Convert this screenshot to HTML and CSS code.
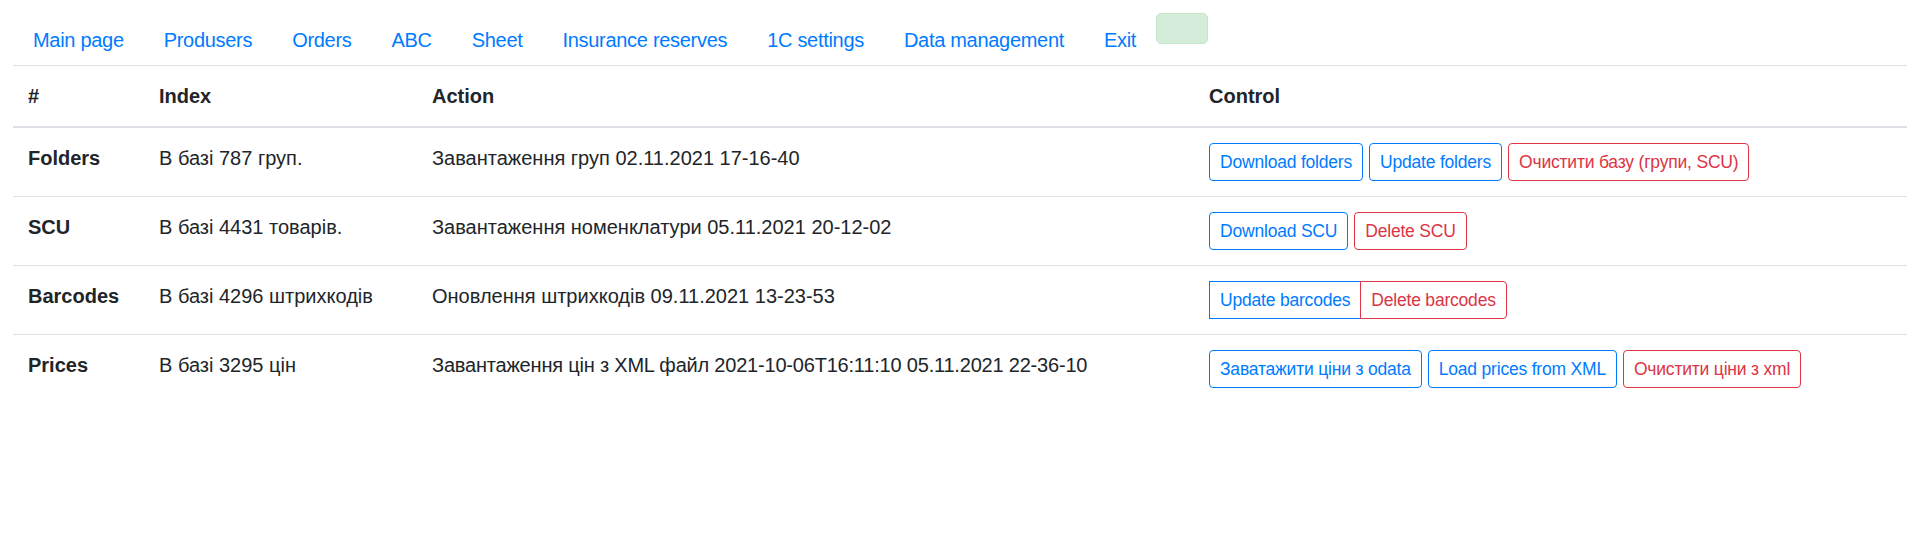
FILE: index.html
```html
<!DOCTYPE html>
<html lang="uk">
<head>
<meta charset="utf-8">
<title>Data management</title>
<link rel="stylesheet" href="styles.css">
</head>
<body>
<div class="page">
  <nav class="nav">
    <a class="nav-link" href="#">Main page</a>
    <a class="nav-link" href="#">Produsers</a>
    <a class="nav-link" href="#">Orders</a>
    <a class="nav-link" href="#">ABC</a>
    <a class="nav-link" href="#">Sheet</a>
    <a class="nav-link" href="#">Insurance reserves</a>
    <a class="nav-link" href="#">1C settings</a>
    <a class="nav-link" href="#">Data management</a>
    <a class="nav-link" href="#">Exit</a>
    <div class="alert-box"></div>
  </nav>
  <table class="table">
    <thead>
      <tr>
        <th class="c1">#</th>
        <th class="c2">Index</th>
        <th class="c3">Action</th>
        <th class="c4">Control</th>
      </tr>
    </thead>
    <tbody>
      <tr>
        <th>Folders</th>
        <td>В базі 787 груп.</td>
        <td>Завантаження груп 02.11.2021 17-16-40</td>
        <td><div class="btns">
          <button class="btn primary">Download folders</button>
          <button class="btn primary">Update folders</button>
          <button class="btn danger">Очистити базу (групи, SCU)</button>
        </div></td>
      </tr>
      <tr>
        <th>SCU</th>
        <td>В базі 4431 товарів.</td>
        <td>Завантаження номенклатури 05.11.2021 20-12-02</td>
        <td><div class="btns">
          <button class="btn primary">Download SCU</button>
          <button class="btn danger">Delete SCU</button>
        </div></td>
      </tr>
      <tr>
        <th>Barcodes</th>
        <td>В базі 4296 штрихкодів</td>
        <td>Оновлення штрихкодів 09.11.2021 13-23-53</td>
        <td><div class="btn-group">
          <button class="btn primary first">Update barcodes</button>
          <button class="btn danger last">Delete barcodes</button>
        </div></td>
      </tr>
      <tr>
        <th>Prices</th>
        <td>В базі 3295 цін</td>
        <td class="long">Завантаження цін з XML файл 2021-10-06T16:11:10 05.11.2021 22-36-10</td>
        <td><div class="btns">
          <button class="btn primary">Заватажити ціни з odata</button>
          <button class="btn primary">Load prices from XML</button>
          <button class="btn danger">Очистити ціни з xml</button>
        </div></td>
      </tr>
    </tbody>
  </table>
</div>
</body>
</html>
```
FILE: styles.css
```css
* { box-sizing: border-box; }
html, body { margin: 0; padding: 0; background: #fff; }
body {
  font-family: "Liberation Sans", Arial, sans-serif;
  font-size: 20px;
  line-height: 30px;
  color: #212529;
}
.page { padding: 0 13px; }
.nav {
  display: flex;
  align-items: flex-start;
  padding-top: 13px;
}
.nav-link {
  display: block;
  padding: 12px 20px 10px;
  color: #007bff;
  text-decoration: none;
  white-space: nowrap;
  letter-spacing: -0.3px;
}
.alert-box {
  width: 52px;
  height: 31px;
  background: #d4edda;
  border: 1px solid #c3e6cb;
  border-radius: 5px;
}
.table {
  width: 100%;
  border-collapse: separate;
  border-spacing: 0;
}
.table th, .table td {
  padding: 15px;
  text-align: left;
  vertical-align: top;
}
.table th { font-weight: 700; }
.table thead th {
  border-top: 1px solid #dee2e6;
  border-bottom: 2px solid #dee2e6;
}
.table tbody tr + tr > * { border-top: 1px solid #dee2e6; }
.long { letter-spacing: -0.2px; }
.c1 { width: 131px; }
.c2 { width: 273px; }
.c3 { width: 777px; }
.btns { display: flex; gap: 6px; }
.btn-group { display: flex; }
.btn {
  font-family: inherit;
  font-size: 17.5px;
  line-height: 26px;
  letter-spacing: -0.2px;
  padding: 5px 10px;
  background: #fff;
  border: 1px solid;
  border-radius: 4px;
  white-space: nowrap;
}
.primary { color: #007bff; border-color: #007bff; }
.danger { color: #dc3545; border-color: #dc3545; }
.first { border-radius: 0; }
.last { border-radius: 0 4px 4px 0; margin-left: -1px; }
```
